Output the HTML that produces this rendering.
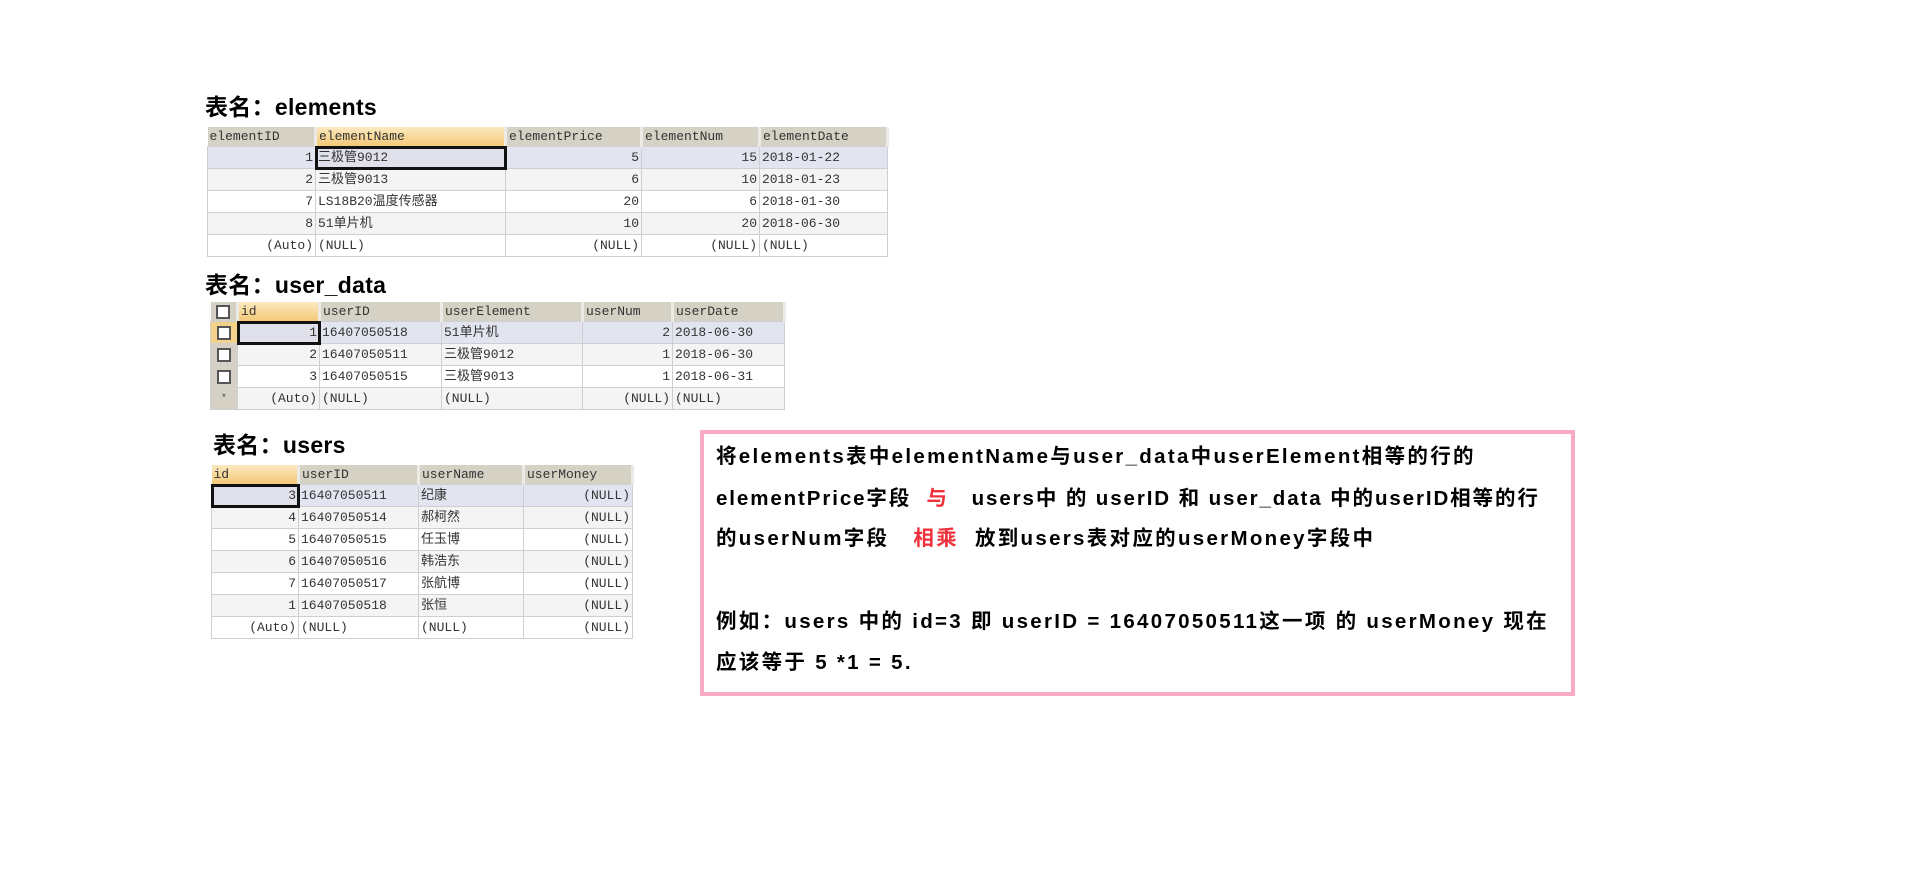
<!DOCTYPE html>
<html><head><meta charset="utf-8">
<style>
html,body{margin:0;padding:0;background:#fff;width:1912px;height:889px;overflow:hidden;position:relative;}
.t{position:absolute;font-family:"Liberation Sans","Noto Sans CJK SC",sans-serif;font-weight:bold;font-size:23px;color:#000;line-height:1;letter-spacing:0.3px;}
table{position:absolute;border-collapse:collapse;table-layout:fixed;font-family:"Liberation Mono","Noto Sans CJK SC",monospace;font-size:13px;color:#333;}
td{border:1px solid #cfcfcf;padding:0 2px;height:21px;white-space:nowrap;overflow:hidden;line-height:21px;}
tr.h td{background:#d5d1c4;border:1px solid #b8b5aa;border-width:0 3px 0 0;border-color:#eceae4;height:19px;line-height:19px;color:#333;}
tr.h td.o{background:linear-gradient(#fbe9bf,#f4c978);}
tr.a td{background:#f4f4f4;}
tr.s td{background:#e2e5ef;}
td.r{text-align:right;}
td.sel{outline:3px solid #111;outline-offset:-2px;background:#dfe0ea!important;}
td.cb{background:#d5d1c4!important;padding:0;text-align:center;}
.box{display:inline-block;width:10px;height:10px;border:2px solid #555;background:#fff;vertical-align:middle;}
.pink{position:absolute;left:700px;top:430px;width:867px;height:258px;border:4px solid #f8aac6;}
.p{position:absolute;left:716px;font-family:"Liberation Sans","Noto Sans CJK SC",sans-serif;font-weight:bold;font-size:20.5px;letter-spacing:2.3px;color:#000;white-space:nowrap;line-height:1;}
.red{color:#f0303a;}
</style></head><body>

<div class="t" style="left:205px;top:96px;">表名：elements</div>
<table style="left:207px;top:127px;width:680px;">
<colgroup><col style="width:108px"><col style="width:190px"><col style="width:136px"><col style="width:118px"><col style="width:128px"></colgroup>
<tr class="h"><td>elementID</td><td class="o">elementName</td><td>elementPrice</td><td>elementNum</td><td>elementDate</td></tr>
<tr class="s"><td class="r">1</td><td class="sel">三极管9012</td><td class="r">5</td><td class="r">15</td><td>2018-01-22</td></tr>
<tr class="a"><td class="r">2</td><td>三极管9013</td><td class="r">6</td><td class="r">10</td><td>2018-01-23</td></tr>
<tr><td class="r">7</td><td>LS18B20温度传感器</td><td class="r">20</td><td class="r">6</td><td>2018-01-30</td></tr>
<tr class="a"><td class="r">8</td><td>51单片机</td><td class="r">10</td><td class="r">20</td><td>2018-06-30</td></tr>
<tr><td class="r">(Auto)</td><td>(NULL)</td><td class="r">(NULL)</td><td class="r">(NULL)</td><td>(NULL)</td></tr>
</table>

<div class="t" style="left:205px;top:274px;">表名：user_data</div>
<table style="left:210px;top:302px;width:574px;">
<colgroup><col style="width:27px"><col style="width:82px"><col style="width:122px"><col style="width:141px"><col style="width:90px"><col style="width:112px"></colgroup>
<tr class="h"><td class="cb"><span class="box"></span></td><td class="o">id</td><td>userID</td><td>userElement</td><td>userNum</td><td>userDate</td></tr>
<tr class="s"><td class="cb" style="background:#f4d28a!important"><span class="box"></span></td><td class="r sel">1</td><td>16407050518</td><td>51单片机</td><td class="r">2</td><td>2018-06-30</td></tr>
<tr class="a"><td class="cb"><span class="box"></span></td><td class="r">2</td><td>16407050511</td><td>三极管9012</td><td class="r">1</td><td>2018-06-30</td></tr>
<tr><td class="cb"><span class="box"></span></td><td class="r">3</td><td>16407050515</td><td>三极管9013</td><td class="r">1</td><td>2018-06-31</td></tr>
<tr class="a"><td class="cb" style="font-size:9px">*</td><td class="r">(Auto)</td><td>(NULL)</td><td>(NULL)</td><td class="r">(NULL)</td><td>(NULL)</td></tr>
</table>

<div class="t" style="left:213px;top:434px;">表名：users</div>
<table style="left:211px;top:465px;width:421px;">
<colgroup><col style="width:87px"><col style="width:120px"><col style="width:105px"><col style="width:109px"></colgroup>
<tr class="h"><td class="o">id</td><td>userID</td><td>userName</td><td>userMoney</td></tr>
<tr class="s"><td class="r sel">3</td><td>16407050511</td><td>纪康</td><td class="r">(NULL)</td></tr>
<tr class="a"><td class="r">4</td><td>16407050514</td><td>郝柯然</td><td class="r">(NULL)</td></tr>
<tr><td class="r">5</td><td>16407050515</td><td>任玉博</td><td class="r">(NULL)</td></tr>
<tr class="a"><td class="r">6</td><td>16407050516</td><td>韩浩东</td><td class="r">(NULL)</td></tr>
<tr><td class="r">7</td><td>16407050517</td><td>张航博</td><td class="r">(NULL)</td></tr>
<tr class="a"><td class="r">1</td><td>16407050518</td><td>张恒</td><td class="r">(NULL)</td></tr>
<tr><td class="r">(Auto)</td><td>(NULL)</td><td>(NULL)</td><td class="r">(NULL)</td></tr>
</table>

<div class="pink"></div>
<div class="p" style="top:447px;">将elements表中elementName与user_data中userElement相等的行的</div>
<div class="p" style="top:489px;letter-spacing:1.9px;">elementPrice字段 &nbsp;<span class="red">与</span> &nbsp; users中 的 userID 和 user_data 中的userID相等的行</div>
<div class="p" style="top:529px;">的userNum字段 &nbsp; <span class="red">相乘</span> &nbsp;放到users表对应的userMoney字段中</div>
<div class="p" style="top:612px;">例如：users 中的 id=3 即 userID = 16407050511这一项 的 userMoney 现在</div>
<div class="p" style="top:653px;">应该等于 5 *1 = 5.</div>
</body></html>
